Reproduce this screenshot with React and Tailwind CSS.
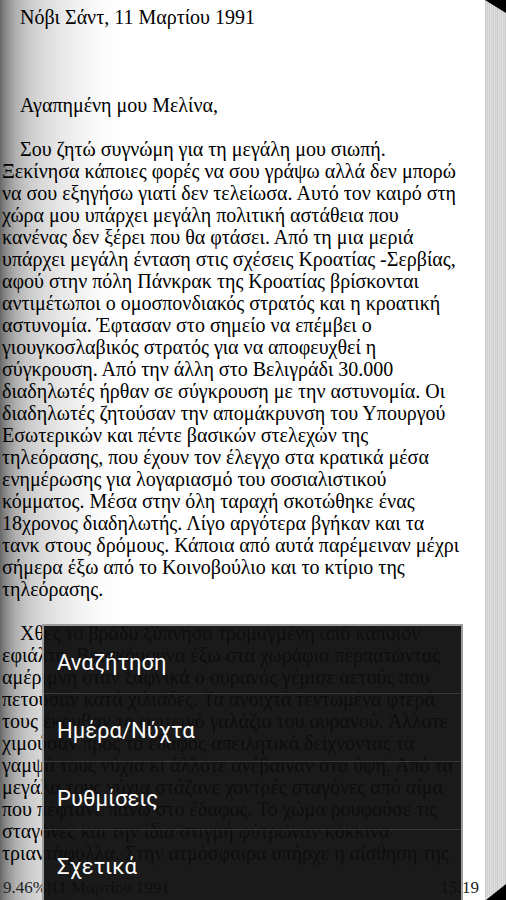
import React from "react";

// page lines, laid out as the reader app breaks them
const header = "Νόβι Σάντ, 11 Μαρτίου 1991";
const greeting = "Αγαπημένη μου Μελίνα,";

const para1 = [
  "Σου ζητώ συγνώμη για τη μεγάλη μου σιωπή.",
  "Ξεκίνησα κάποιες φορές να σου γράψω αλλά δεν μπορώ",
  "να σου εξηγήσω γιατί δεν τελείωσα. Αυτό τον καιρό στη",
  "χώρα μου υπάρχει μεγάλη πολιτική αστάθεια που",
  "κανένας δεν ξέρει που θα φτάσει. Από τη μια μεριά",
  "υπάρχει μεγάλη ένταση στις σχέσεις Κροατίας -Σερβίας,",
  "αφού στην πόλη Πάνκρακ της Κροατίας βρίσκονται",
  "αντιμέτωποι ο ομοσπονδιακός στρατός και η κροατική",
  "αστυνομία. Έφτασαν στο σημείο να επέμβει ο",
  "γιουγκοσλαβικός στρατός για να αποφευχθεί η",
  "σύγκρουση. Από την άλλη στο Βελιγράδι 30.000",
  "διαδηλωτές ήρθαν σε σύγκρουση με την αστυνομία. Οι",
  "διαδηλωτές ζητούσαν την απομάκρυνση του Υπουργού",
  "Εσωτερικών και πέντε βασικών στελεχών της",
  "τηλεόρασης, που έχουν τον έλεγχο στα κρατικά μέσα",
  "ενημέρωσης για λογαριασμό του σοσιαλιστικού",
  "κόμματος. Μέσα στην όλη ταραχή σκοτώθηκε ένας",
  "18χρονος διαδηλωτής. Λίγο αργότερα βγήκαν και τα",
  "τανκ στους δρόμους. Κάποια από αυτά παρέμειναν μέχρι",
  "σήμερα έξω από το Κοινοβούλιο και το κτίριο της",
  "τηλεόρασης.",
];

const para2 = [
  "Χθες το βράδυ ξύπνησα τρομαγμένη από κάποιον",
  "εφιάλτη. Βρισκόμουνα έξω στα χωράφια περπατώντας",
  "αμέριμνη όταν ξαφνικά ο ουρανός γέμισε αετούς που",
  "πετούσαν κατά χιλιάδες. Τα ανοιχτά τεντωμένα φτερά",
  "τους έκρυβαν το φωτεινό γαλάζιο του ουρανού. Άλλοτε",
  "χιμούσαν προς το έδαφος απειλητικά δείχνοντας τα",
  "γαμψά τους νύχια κι άλλοτε ανέβαιναν στα ύψη. Από τα",
  "μεγάλα τους νύχια στάζανε χοντρές σταγόνες από αίμα",
  "που πέφτανε πάνω στο έδαφος. Το χώμα ρουφούσε τις",
  "σταγόνες και την ίδια στιγμή φύτρωναν κόκκινα",
  "τριαντάφυλλα. Στην ατμόσφαιρα υπήρχε η αίσθηση της",
];

const menuItems = ["Αναζήτηση", "Ημέρα/Νύχτα", "Ρυθμίσεις", "Σχετικά"];

function Paragraph({ lines }) {
  return (
    <div>
      {lines.map((line, i) => (
        <div key={i} className={`whitespace-nowrap ${i === 0 ? "pl-[18px]" : ""}`}>
          {line}
        </div>
      ))}
    </div>
  );
}

// stack of page edges on the right side
function PageStack() {
  const stripes = [
    "#c6c6c6", "#e2e2e2", "#cfcfcf", "#dedede", "#c9c9c9", "#e6e6e6",
    "#d2d2d2", "#dcdcdc", "#cbcbcb", "#e4e4e4", "#d0d0d0", "#dadada",
    "#c8c8c8", "#e0e0e0", "#d4d4d4", "#dddddd", "#cdcdcd", "#e3e3e3",
    "#d1d1d1", "#d9d9d9", "#cccccc",
  ];
  return (
    <svg width="21" height="900" viewBox="0 0 21 900" className="block shrink-0">
      {stripes.map((c, i) => (
        <rect key={i} x={i} y="0" width="1" height="900" fill={c} />
      ))}
      <polygon points="0,0 21,0 21,13" fill="#000" />
      <polygon points="1,900 21,884 21,900" fill="#000" />
    </svg>
  );
}

export default function App() {
  return (
    <div className="relative w-[506px] h-[900px] overflow-hidden flex bg-white">
      {/* Page */}
      <div className="flex-1 h-full flex flex-col bg-[linear-gradient(to_right,#666666_0px,#7a7a7a_3px,#939393_8px,#b0b0b0_16px,#c9c9c9_28px,#d9d9d9_42px,#e8e8e8_62px,#f3f3f3_82px,#fbfbfb_100px,#ffffff_118px)] font-['Liberation_Serif','Times_New_Roman',serif] text-black">
        <div className="pt-[6px] pl-[2px] text-[20px] leading-[22px]">
          <div className="pl-[18px] whitespace-nowrap">{header}</div>
          <div className="h-[66px]" />
          <div className="pl-[18px] whitespace-nowrap">{greeting}</div>
          <div className="h-[22px]" />
          <Paragraph lines={para1} />
          <div className="h-[22px]" />
          <Paragraph lines={para2} />
        </div>
        <div className="mt-auto pb-[2px] px-[3px] flex justify-between text-[17px] leading-[20px] text-[#222]">
          <span>9.46%|11 Μαρτίου 1991</span>
          <span className="pr-[3px]">15:19</span>
        </div>
      </div>
      <PageStack />

      {/* Options menu overlay */}
      <div className="absolute left-[42px] top-[624px] w-[421px] h-[280px] border-2 border-b-0 border-[#9c9c9c] bg-[#0e0e0e]/95 font-['Roboto','Noto_Sans',sans-serif] text-white">
        {menuItems.map((item, i) => (
          <div
            key={item}
            className={`h-[68px] flex items-center pl-[13px] pt-[5px] text-[22px] ${
              i < menuItems.length - 1 ? "border-b border-[#3a3a3a]" : ""
            }`}
          >
            {item}
          </div>
        ))}
      </div>
    </div>
  );
}
